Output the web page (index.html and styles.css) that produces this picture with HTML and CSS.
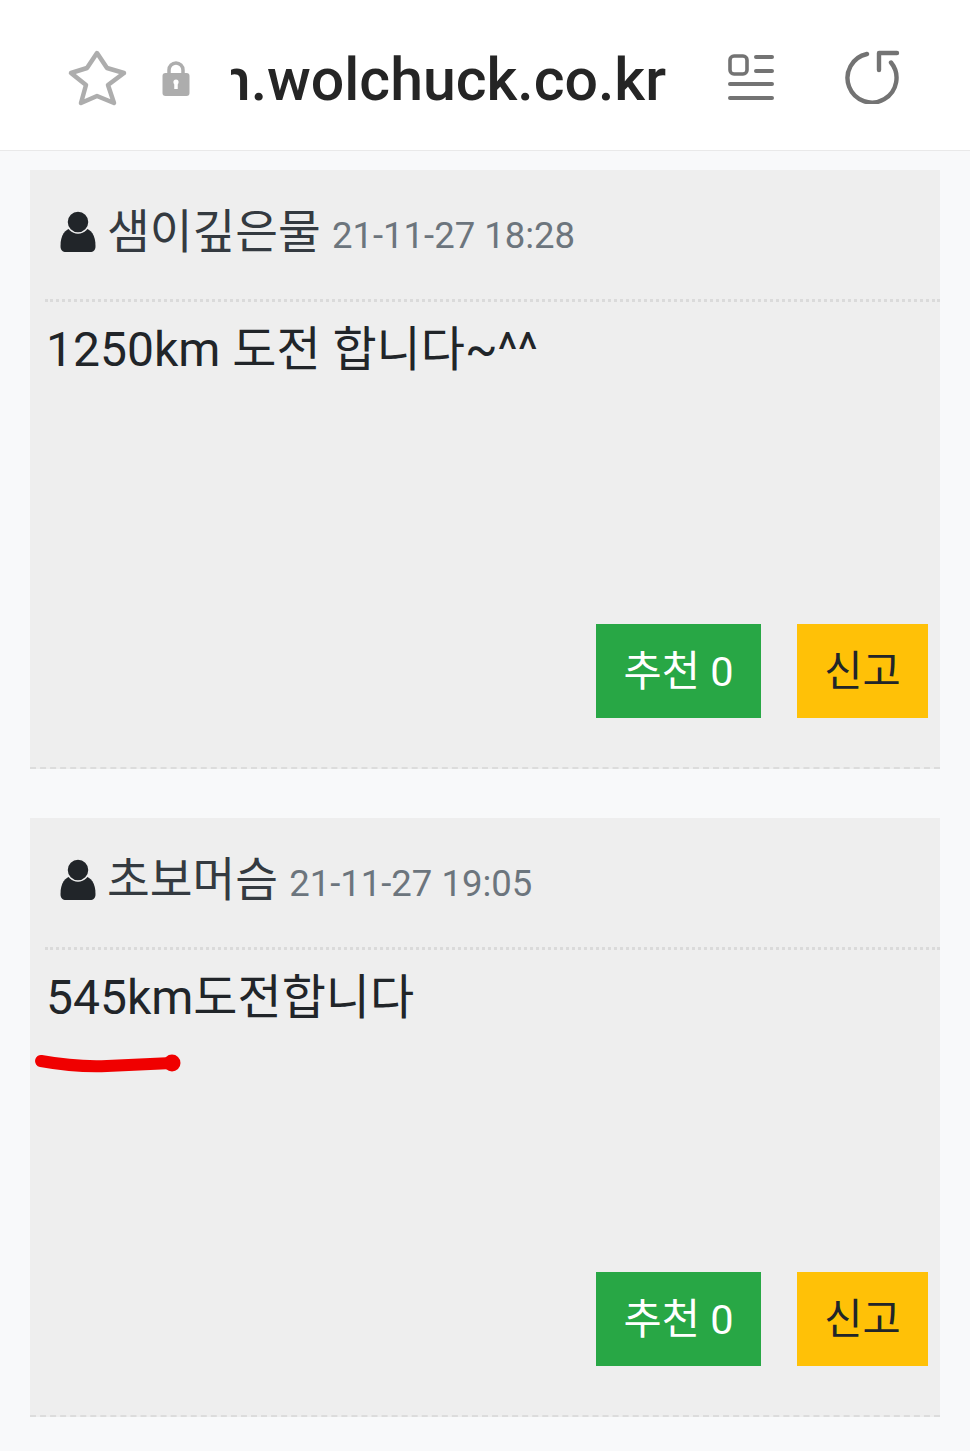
FILE: index.html
```html
<!DOCTYPE html>
<html lang="ko">
<head>
    <meta charset="UTF-8">
    <meta name="viewport" content="width=device-width, initial-scale=1.0">
    <title>wolchuck.co.kr</title>
    <link rel="stylesheet" href="styles.css">
</head>
<body>
    <header class="address-bar">
        <svg class="icon-star" viewBox="0 0 60 58" width="60" height="58">
            <path d="M30 4 L40 19 L57 24 L41 36 L47 54 L30 47 L14 54 L19 36 L4 24 L20 19 Z" fill="none" stroke="#adadad" stroke-width="4.5" stroke-linejoin="round"/>
        </svg>
        <svg class="icon-lock" viewBox="0 0 28 38" width="28" height="38">
            <path d="M7 17 V11 a7 7 0 0 1 14 0 V17" fill="none" stroke="#adadad" stroke-width="3.5"/>
            <rect x="0.5" y="14" width="27" height="23" rx="3" fill="#adadad"/>
            <path d="M14 22 V30" stroke="#fff" stroke-width="3.5"/>
            <circle cx="14" cy="23" r="2.6" fill="#fff"/>
        </svg>
        <div class="url"><span>m.wolchuck.co.kr</span></div>
        <svg class="icon-reader" viewBox="0 0 46 48" width="46" height="48">
            <rect x="2" y="3" width="17" height="18" rx="4" fill="none" stroke="#737373" stroke-width="3.6"/>
            <path d="M28 4 H44 M28 18 H44 M2 31 H44 M2 45 H44" stroke="#737373" stroke-width="4" stroke-linecap="round"/>
        </svg>
        <svg class="icon-reload" viewBox="0 0 56 56" width="56" height="56">
            <path d="M22 6 A24.5 24.5 0 1 0 46 14.5" fill="none" stroke="#737373" stroke-width="4.4" stroke-linecap="round"/>
            <path d="M34 22 V5 H52" fill="none" stroke="#737373" stroke-width="4.4" stroke-linecap="round" stroke-linejoin="round"/>
        </svg>
    </header>

    <main class="comments">
        <article class="comment">
            <div class="comment-head">
                <svg class="icon-user" viewBox="0 0 36 44" width="36" height="44">
                    <path d="M0.5 36 C0.5 25 5 19 12 18 H24 C31 19 35.5 25 35.5 36 C35.5 40 33.5 42 30 42 H6 C2.5 42 0.5 40 0.5 36 Z" fill="#212529"/>
                    <circle cx="18" cy="12" r="11" fill="#212529" stroke="#eeeeee" stroke-width="1.5"/>
                </svg>
                <span class="name">샘이깊은물</span>
                <span class="date">21-11-27 18:28</span>
            </div>
            <p class="comment-body">1250km 도전 합니다~^^</p>
            <div class="comment-actions">
                <button type="button" class="btn btn-green">추천 0</button>
                <button type="button" class="btn btn-yellow">신고</button>
            </div>
        </article>

        <article class="comment">
            <div class="comment-head">
                <svg class="icon-user" viewBox="0 0 36 44" width="36" height="44">
                    <path d="M0.5 36 C0.5 25 5 19 12 18 H24 C31 19 35.5 25 35.5 36 C35.5 40 33.5 42 30 42 H6 C2.5 42 0.5 40 0.5 36 Z" fill="#212529"/>
                    <circle cx="18" cy="12" r="11" fill="#212529" stroke="#eeeeee" stroke-width="1.5"/>
                </svg>
                <span class="name">초보머슴</span>
                <span class="date">21-11-27 19:05</span>
            </div>
            <p class="comment-body">545km도전합니다</p>
            <!-- red marker drawn over the screenshot -->
            <svg class="marker" viewBox="0 0 150 24" width="150" height="24">
                <path d="M8 10 C30 14 50 16 74 15 C100 14 120 13 139 12" fill="none" stroke="#f00000" stroke-width="12" stroke-linecap="round"/>
                <circle cx="139" cy="12" r="8.5" fill="#f00000"/>
            </svg>
            <div class="comment-actions">
                <button type="button" class="btn btn-green">추천 0</button>
                <button type="button" class="btn btn-yellow">신고</button>
            </div>
        </article>
    </main>
</body>
</html>
```

FILE: styles.css
```css
* {
    box-sizing: border-box;
}
body {
    margin: 0;
    height: 1451px;
    overflow: hidden;
    background-color: #f8f9fa;
    font-family: Roboto, "Noto Sans CJK KR", sans-serif;
    color: #212529;
}

.address-bar {
    display: flex;
    align-items: center;
    height: 151px;
    padding: 0 0 0 67px;
    background-color: #fff;
    border-bottom: 1px solid #e9e9e9;
}
.icon-star {
    flex: none;
    margin-top: 6px;
}
.icon-lock {
    flex: none;
    margin-left: 35px;
    margin-top: 6px;
}
.url {
    display: flex;
    justify-content: flex-end;
    flex: none;
    width: 435px;
    margin-left: 41px;
    padding-top: 10px;
    overflow: hidden;
    font-size: 59px;
    font-weight: 500;
    line-height: 60px;
    color: #252525;
    white-space: nowrap;
}
.icon-reader {
    flex: none;
    margin-left: 62px;
    margin-top: 4px;
}
.icon-reload {
    flex: none;
    margin-left: 71px;
    margin-top: 2px;
}

.comments {
    display: flex;
    flex-direction: column;
    gap: 49px;
    padding: 19px 30px 0;
}
.comment {
    position: relative;
    display: flex;
    flex-direction: column;
    height: 599px;
    padding: 0 0 0 15px;
    background-color: #eeeeee;
    border-bottom: 2px dashed #dcdcdc;
}
.comment-head {
    display: flex;
    align-items: baseline;
    height: 132px;
    padding: 36px 0 0 15px;
    border-bottom: 3px dotted #dadada;
}
.icon-user {
    flex: none;
    align-self: flex-start;
    margin-top: 4px;
}
.name {
    margin-left: 11px;
    font-size: 46.5px;
    line-height: 52px;
    color: #343a40;
}
.date {
    margin-left: 11px;
    font-size: 36.5px;
    color: #6c757d;
}
.comment-body {
    flex: 1;
    margin: 18px 0 0 1px;
    font-size: 48px;
    line-height: 60px;
    color: #212529;
}
.marker {
    position: absolute;
    left: 3px;
    top: 233px;
}
.comment-actions {
    display: flex;
    justify-content: flex-end;
    gap: 36px;
    padding: 0 12px 49px 0;
}
.btn {
    height: 94px;
    padding: 0 0 6px;
    border: none;
    font-family: inherit;
    font-size: 41.5px;
    cursor: pointer;
}
.btn-green {
    width: 165px;
    background-color: #28a745;
    color: #fff;
}
.btn-yellow {
    width: 131px;
    background-color: #ffc107;
    color: #212529;
}
```
